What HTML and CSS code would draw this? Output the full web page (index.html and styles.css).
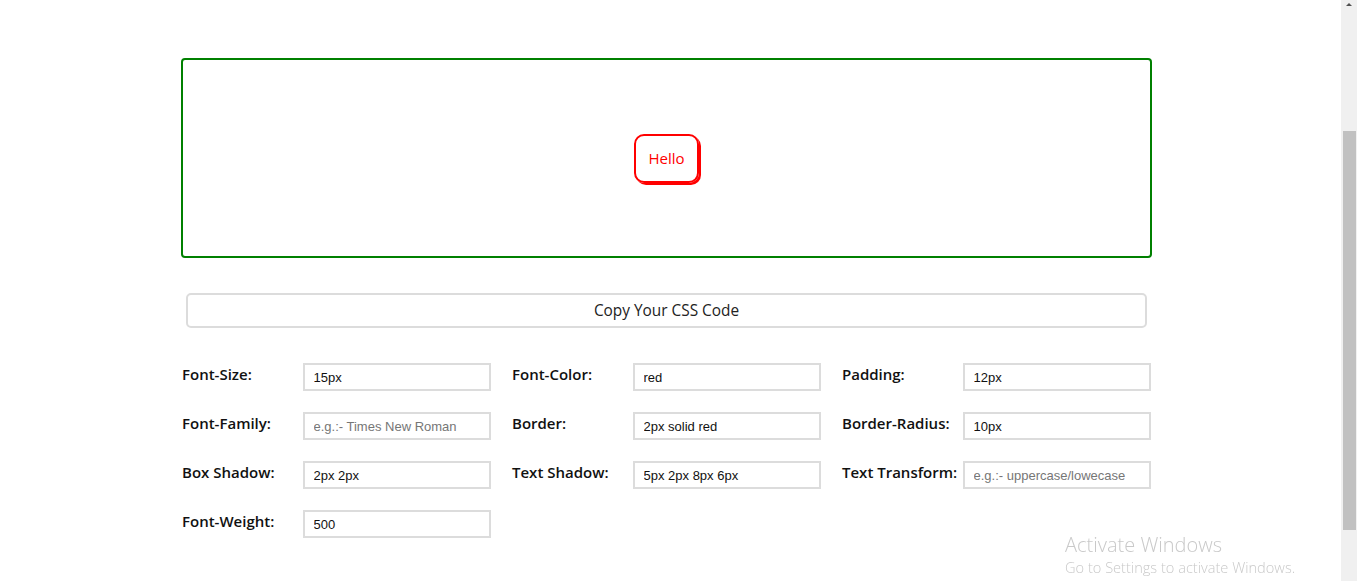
FILE: index.html
```html
<!DOCTYPE html>
<html>
<head>
<meta charset="utf-8">
<link rel="stylesheet" href="styles.css">
</head>
<body>
<div class="page">
  <div class="main">
    <div class="preview">
      <div class="hello">Hello</div>
    </div>
    <button class="copy">Copy Your CSS Code</button>
    <div class="form">
      <label class="field"><span class="lbl">Font-Size:</span><input type="text" value="15px"></label>
      <label class="field"><span class="lbl">Font-Color:</span><input type="text" value="red"></label>
      <label class="field"><span class="lbl">Padding:</span><input type="text" value="12px"></label>
      <label class="field"><span class="lbl">Font-Family:</span><input type="text" placeholder="e.g.:- Times New Roman"></label>
      <label class="field"><span class="lbl">Border:</span><input type="text" value="2px solid red"></label>
      <label class="field"><span class="lbl">Border-Radius:</span><input type="text" value="10px"></label>
      <label class="field"><span class="lbl">Box Shadow:</span><input type="text" value="2px 2px"></label>
      <label class="field"><span class="lbl">Text Shadow:</span><input type="text" value="5px 2px 8px 6px"></label>
      <label class="field"><span class="lbl">Text Transform:</span><input type="text" placeholder="e.g.:- uppercase/lowecase"></label>
      <label class="field"><span class="lbl">Font-Weight:</span><input type="text" value="500"></label>
    </div>
  </div>
</div>
<div class="scrollbar">
  <div class="arrow"></div>
  <div class="thumb"></div>
</div>
<div class="watermark">
  <div class="wm-title">Activate Windows</div>
  <div class="wm-sub">Go to Settings to activate Windows.</div>
</div>
</body>
</html>
```

FILE: styles.css
```css
html, body {
  margin: 0;
  padding: 0;
  background: #fff;
  overflow: hidden;
  height: 100%;
}
body {
  font-family: "Open Sans", "Noto Sans", sans-serif;
  color: #111;
}
.page {
  width: 1341px;
  padding-top: 58px;
}
.main {
  width: 971px;
  margin-left: 181px;
}
.preview {
  box-sizing: border-box;
  height: 200px;
  border: 2px solid #008000;
  border-radius: 4px;
  display: flex;
  align-items: center;
  justify-content: center;
}
.hello {
  font-size: 15px;
  font-weight: 500;
  color: red;
  padding: 12px;
  border: 2px solid red;
  border-radius: 10px;
  box-shadow: 2px 2px red;
  line-height: 21px;
}
.copy {
  display: block;
  box-sizing: border-box;
  width: 961px;
  height: 35px;
  margin: 35px 0 0 5px;
  background: #fff;
  border: 2px solid #dcdcdc;
  border-radius: 5px;
  font-family: "Open Sans", "Noto Sans", sans-serif;
  font-size: 15.4px;
  color: #222;
  padding: 0;
}
.form {
  margin-top: 35px;
  margin-left: 1px;
  display: grid;
  grid-template-columns: repeat(3, 308.5px);
  column-gap: 21.5px;
  row-gap: 21px;
}
.field {
  display: flex;
  align-items: flex-start;
  height: 28px;
}
.lbl {
  width: 120.5px;
  flex: none;
  font-size: 15px;
  font-weight: 600;
  line-height: 20px;
  margin-top: 1px;
  color: #111;
}
.field input {
  box-sizing: border-box;
  width: 188px;
  height: 28px;
  border: 2px solid #dcdcdc;
  padding: 0 9px;
  margin: 0;
  font-family: "Liberation Sans", Arial, sans-serif;
  font-size: 13px;
  color: #111;
  outline: none;
}
.field input::placeholder {
  color: #767676;
}
.scrollbar {
  position: fixed;
  top: 0;
  right: 0;
  width: 16px;
  height: 100%;
  background: #f0f0f0;
}
.arrow {
  position: absolute;
  top: 3px;
  left: 5px;
  width: 0;
  height: 0;
  border-left: 3px solid transparent;
  border-right: 3px solid transparent;
  border-bottom: 3px solid #505050;
}
.thumb {
  position: absolute;
  top: 131px;
  left: 2px;
  width: 13px;
  height: 399px;
  background: #c1c1c1;
}
.watermark {
  position: fixed;
  left: 1065px;
  top: 532px;
  color: #c9c9c9;
  font-family: "Open Sans", "Noto Sans", sans-serif;
  pointer-events: none;
}
.wm-title {
  font-size: 20px;
  font-weight: 300;
  line-height: 25px;
}
.wm-sub {
  font-size: 14.6px;
  font-weight: 300;
  line-height: 20px;
}
```
